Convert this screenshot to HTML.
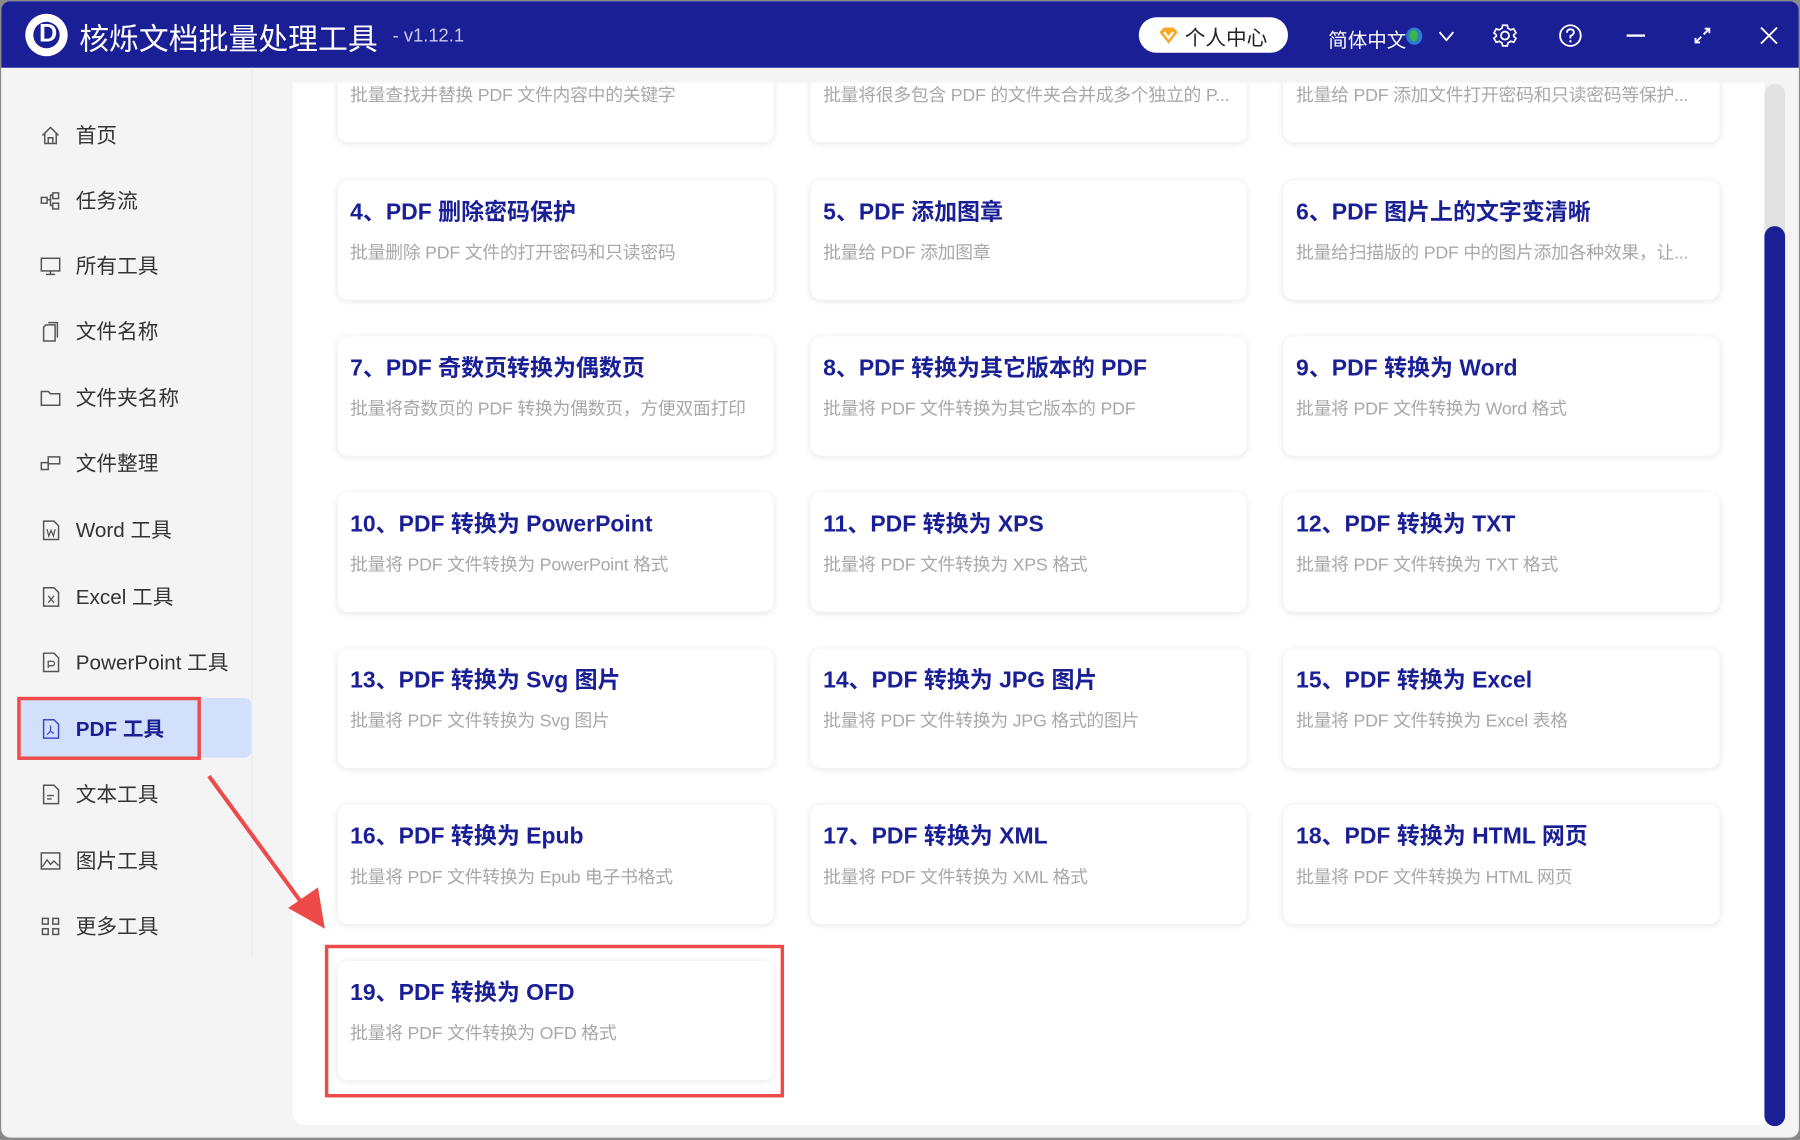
<!DOCTYPE html>
<html><head><meta charset="utf-8"><style>
*{margin:0;padding:0;box-sizing:border-box}
html,body{width:1800px;height:1140px;overflow:hidden;background:#8a8a8a}
#w{position:absolute;left:0;top:0;width:1568px;height:993px;transform:scale(1.147959);transform-origin:0 0;font-family:"Liberation Sans","Noto Sans CJK SC",sans-serif}
.win{position:absolute;left:1px;top:1px;width:1566px;height:990px;background:#f4f4f4;border-radius:8px;overflow:hidden}
.tb{position:absolute;left:0;top:0;width:100%;height:58px;background:#1a1f96}
.abs{position:absolute}
.side div.it{position:absolute;left:34px;font-size:18px;color:#333;height:24px;line-height:24px}
.side div.it span{position:absolute;left:31px;white-space:nowrap}
.side svg{position:absolute;left:0;top:3px}
.main{position:absolute;left:254px;top:71px;width:1282px;height:908px;background:#fff;border-radius:0 0 0 10px;overflow:hidden}
.card{position:absolute;width:380px;height:104px;background:#fff;border-radius:9px;box-shadow:0 1px 6px rgba(0,0,0,.10)}
.card b{position:absolute;left:11px;top:11px;font-size:20px;color:#1a1f96;white-space:nowrap}
.card i{position:absolute;left:11px;top:51px;font-style:normal;font-size:15.5px;color:#a8a8a8;white-space:nowrap;letter-spacing:-0.2px}
</style></head><body><div id="w"><div class="win">
<div class="tb">
 <div class="abs" style="left:21px;top:11px;width:37px;height:37px;border-radius:50%;background:#fff"></div>
 <div class="abs" style="left:28px;top:18px;width:23px;height:23px;border-radius:50%;background:#1a1f96"></div>
 <div class="abs" style="left:33px;top:15px;font:bold 22px 'Liberation Sans';color:#fff">D</div>
 <div class="abs" style="left:68px;top:13px;font-size:26px;color:#fff;white-space:nowrap">核烁文档批量处理工具</div>
 <div class="abs" style="left:341px;top:22px;font-size:16px;color:#c8cae8">- v1.12.1</div>
 <div class="abs" style="left:991px;top:14px;width:130px;height:31px;border-radius:16px;background:#fff"></div>
 <svg class="abs" style="left:1008px;top:22px" width="18" height="16" viewBox="0 0 18 16"><path d="M1 5L5 1H13L17 5L9 15Z" fill="#f6a823"/><path d="M5 5L9 10L13 5" stroke="#fff" stroke-width="2" fill="none"/></svg>
 <div class="abs" style="left:1031px;top:18px;font-size:18px;color:#222">个人中心</div>
 <div class="abs" style="left:1156px;top:20px;font-size:17px;color:#fff">简体中文</div>
 <div class="abs" style="left:1224px;top:23px;width:14px;height:15px;border-radius:50%;background:#2a7fd0"></div>
 <div class="abs" style="left:1227px;top:25px;width:7px;height:10px;border-radius:50%;background:#3cb54a"></div>
 <svg class="abs" style="left:1251px;top:24px" width="16" height="12"><path d="M2 3L8 10L14 3" stroke="#fff" stroke-width="1.6" fill="none"/></svg>
 <svg class="abs" style="left:1299px;top:19px" width="22" height="22" viewBox="0 0 22 22"><circle cx="11" cy="11" r="3.5" stroke="#fff" stroke-width="1.6" fill="none"/><path d="M9 2H13L13.6 4.6L16 6L18.6 5.2L20.6 8.6L18.6 10.4V11.6L20.6 13.4L18.6 16.8L16 16L13.6 17.4L13 20H9L8.4 17.4L6 16L3.4 16.8L1.4 13.4L3.4 11.6V10.4L1.4 8.6L3.4 5.2L6 6L8.4 4.6Z" stroke="#fff" stroke-width="1.5" fill="none"/></svg>
 <svg class="abs" style="left:1356px;top:19px" width="22" height="22"><circle cx="11" cy="11" r="9" stroke="#fff" stroke-width="1.6" fill="none"/><path d="M8 8.5Q8 5.5 11 5.5Q14 5.5 14 8.2Q14 10 11 11.3V13.5" stroke="#fff" stroke-width="1.6" fill="none"/><circle cx="11" cy="16" r="1" fill="#fff"/></svg>
 <div class="abs" style="left:1416px;top:29px;width:16px;height:2px;background:#fff"></div>
 <svg class="abs" style="left:1474px;top:22px" width="16" height="16"><path d="M9 7L14 2M10 2H14V6M7 9L2 14M2 10V14H6" stroke="#fff" stroke-width="1.6" fill="none"/></svg>
 <svg class="abs" style="left:1532px;top:22px" width="16" height="16"><path d="M1 1L15 15M15 1L1 15" stroke="#fff" stroke-width="1.6"/></svg>
</div>
<div class="abs" style="left:218px;top:58px;width:1px;height:775px;background:#ebebeb"></div>
<div class="abs" style="left:14px;top:607px;width:204px;height:52px;background:#d3e0fb;border-radius:6px"></div>
<div class="side">
 <div class="it" style="top:105px"><svg width="18" height="18"><path d="M2 9L9 2L16 9M4 7V16H14V7M7 16V11H11V16" stroke="#555" stroke-width="1.3" fill="none"/></svg><span>首页</span></div>
 <div class="it" style="top:162px"><svg width="18" height="18"><rect x="1" y="6" width="5" height="5" stroke="#555" fill="none" stroke-width="1.3"/><rect x="11" y="2" width="5" height="5" stroke="#555" fill="none" stroke-width="1.3"/><rect x="11" y="11" width="5" height="5" stroke="#555" fill="none" stroke-width="1.3"/><path d="M6 8H9V4H11M9 8V13H11" stroke="#555" fill="none" stroke-width="1.3"/></svg><span>任务流</span></div>
 <div class="it" style="top:219px"><svg width="18" height="18"><rect x="1" y="2" width="16" height="11" stroke="#555" fill="none" stroke-width="1.3"/><path d="M9 13V16M5 16H13" stroke="#555" stroke-width="1.3"/></svg><span>所有工具</span></div>
 <div class="it" style="top:276px"><svg width="18" height="18"><path d="M5 3H13V17H3V5Z M7 1H15V14" stroke="#555" fill="none" stroke-width="1.3"/></svg><span>文件名称</span></div>
 <div class="it" style="top:334px"><svg width="18" height="18"><path d="M1 3H7L9 5H17V15H1Z" stroke="#555" fill="none" stroke-width="1.3"/></svg><span>文件夹名称</span></div>
 <div class="it" style="top:391px"><svg width="18" height="18"><rect x="1" y="8" width="6" height="6" stroke="#555" fill="none" stroke-width="1.3"/><rect x="7" y="3" width="10" height="6" stroke="#555" fill="none" stroke-width="1.3"/></svg><span>文件整理</span></div>
 <div class="it" style="top:449px"><svg width="18" height="18"><path d="M3 1H12L16 5V17H3Z" stroke="#555" fill="none" stroke-width="1.3"/><path d="M6 8L7.5 14L9.5 9L11.5 14L13 8" stroke="#555" fill="none" stroke-width="1.1"/></svg><span>Word 工具</span></div>
 <div class="it" style="top:507px"><svg width="18" height="18"><path d="M3 1H12L16 5V17H3Z" stroke="#555" fill="none" stroke-width="1.3"/><path d="M7 8L12 14M12 8L7 14" stroke="#555" stroke-width="1.1"/></svg><span>Excel 工具</span></div>
 <div class="it" style="top:564px"><svg width="18" height="18"><path d="M3 1H12L16 5V17H3Z" stroke="#555" fill="none" stroke-width="1.3"/><path d="M7 14V8H10.5A2 2 0 0 1 10.5 12H7" stroke="#555" fill="none" stroke-width="1.1"/></svg><span>PowerPoint 工具</span></div>
 <div class="it" style="top:622px;color:#1a1f96;font-weight:bold"><svg width="18" height="18"><path d="M3 1H12L16 5V17H3Z" stroke="#3b4bd0" fill="none" stroke-width="1.3"/><path d="M9 6V11L6 14M9 11L12 13" stroke="#3b4bd0" fill="none" stroke-width="1.1"/></svg><span>PDF 工具</span></div>
 <div class="it" style="top:679px"><svg width="18" height="18"><path d="M3 1H12L16 5V17H3Z" stroke="#555" fill="none" stroke-width="1.3"/><path d="M6 10H12M6 13H10" stroke="#555" stroke-width="1.2"/></svg><span>文本工具</span></div>
 <div class="it" style="top:737px"><svg width="18" height="18"><rect x="1" y="2" width="16" height="14" stroke="#555" fill="none" stroke-width="1.3"/><path d="M2 14L6 8L9 12L12 9L16 13" stroke="#555" fill="none" stroke-width="1.2"/></svg><span>图片工具</span></div>
 <div class="it" style="top:794px"><svg width="18" height="18"><rect x="2" y="2" width="5" height="5" stroke="#555" fill="none" stroke-width="1.3"/><rect x="11" y="2" width="5" height="5" stroke="#555" fill="none" stroke-width="1.3"/><rect x="2" y="11" width="5" height="5" stroke="#555" fill="none" stroke-width="1.3"/><rect x="11" y="11" width="5" height="5" stroke="#555" fill="none" stroke-width="1.3"/></svg><span>更多工具</span></div>
</div>
<div class="abs" style="left:14px;top:606px;width:160px;height:55px;border:3px solid #ef4a4a"></div>
<div class="main">
 <div class="card" style="left:39px;top:-52px"><i>批量查找并替换 PDF 文件内容中的关键字</i></div>
 <div class="card" style="left:451px;top:-52px"><i>批量将很多包含 PDF 的文件夹合并成多个独立的 P...</i></div>
 <div class="card" style="left:863px;top:-52px"><i>批量给 PDF 添加文件打开密码和只读密码等保护...</i></div>
 <div class="card" style="left:39px;top:85px"><b>4、PDF 删除密码保护</b><i>批量删除 PDF 文件的打开密码和只读密码</i></div>
 <div class="card" style="left:451px;top:85px"><b>5、PDF 添加图章</b><i>批量给 PDF 添加图章</i></div>
 <div class="card" style="left:863px;top:85px"><b>6、PDF 图片上的文字变清晰</b><i>批量给扫描版的 PDF 中的图片添加各种效果，让...</i></div>
 <div class="card" style="left:39px;top:221px"><b>7、PDF 奇数页转换为偶数页</b><i>批量将奇数页的 PDF 转换为偶数页，方便双面打印</i></div>
 <div class="card" style="left:451px;top:221px"><b>8、PDF 转换为其它版本的 PDF</b><i>批量将 PDF 文件转换为其它版本的 PDF</i></div>
 <div class="card" style="left:863px;top:221px"><b>9、PDF 转换为 Word</b><i>批量将 PDF 文件转换为 Word 格式</i></div>
 <div class="card" style="left:39px;top:357px"><b>10、PDF 转换为 PowerPoint</b><i>批量将 PDF 文件转换为 PowerPoint 格式</i></div>
 <div class="card" style="left:451px;top:357px"><b>11、PDF 转换为 XPS</b><i>批量将 PDF 文件转换为 XPS 格式</i></div>
 <div class="card" style="left:863px;top:357px"><b>12、PDF 转换为 TXT</b><i>批量将 PDF 文件转换为 TXT 格式</i></div>
 <div class="card" style="left:39px;top:493px"><b>13、PDF 转换为 Svg 图片</b><i>批量将 PDF 文件转换为 Svg 图片</i></div>
 <div class="card" style="left:451px;top:493px"><b>14、PDF 转换为 JPG 图片</b><i>批量将 PDF 文件转换为 JPG 格式的图片</i></div>
 <div class="card" style="left:863px;top:493px"><b>15、PDF 转换为 Excel</b><i>批量将 PDF 文件转换为 Excel 表格</i></div>
 <div class="card" style="left:39px;top:629px"><b>16、PDF 转换为 Epub</b><i>批量将 PDF 文件转换为 Epub 电子书格式</i></div>
 <div class="card" style="left:451px;top:629px"><b>17、PDF 转换为 XML</b><i>批量将 PDF 文件转换为 XML 格式</i></div>
 <div class="card" style="left:863px;top:629px"><b>18、PDF 转换为 HTML 网页</b><i>批量将 PDF 文件转换为 HTML 网页</i></div>
 <div class="card" style="left:39px;top:765px"><b>19、PDF 转换为 OFD</b><i>批量将 PDF 文件转换为 OFD 格式</i></div>
 <div class="abs" style="left:28px;top:751px;width:400px;height:133px;border:3px solid #ef4a4a"></div>
</div>
<div class="abs" style="left:1536px;top:72px;width:18px;height:908px;border-radius:9px;background:#e2e2e2"></div>
<div class="abs" style="left:1536px;top:196px;width:18px;height:784px;border-radius:9px;background:#1a1f96"></div>
<svg class="abs" style="left:0;top:0" width="1566" height="990"><path d="M181 675L268 794" stroke="#ef4a4a" stroke-width="3.5"/><path d="M250 790L282 808L276 772Z" fill="#ef4a4a"/></svg>
</div></div></body></html>
